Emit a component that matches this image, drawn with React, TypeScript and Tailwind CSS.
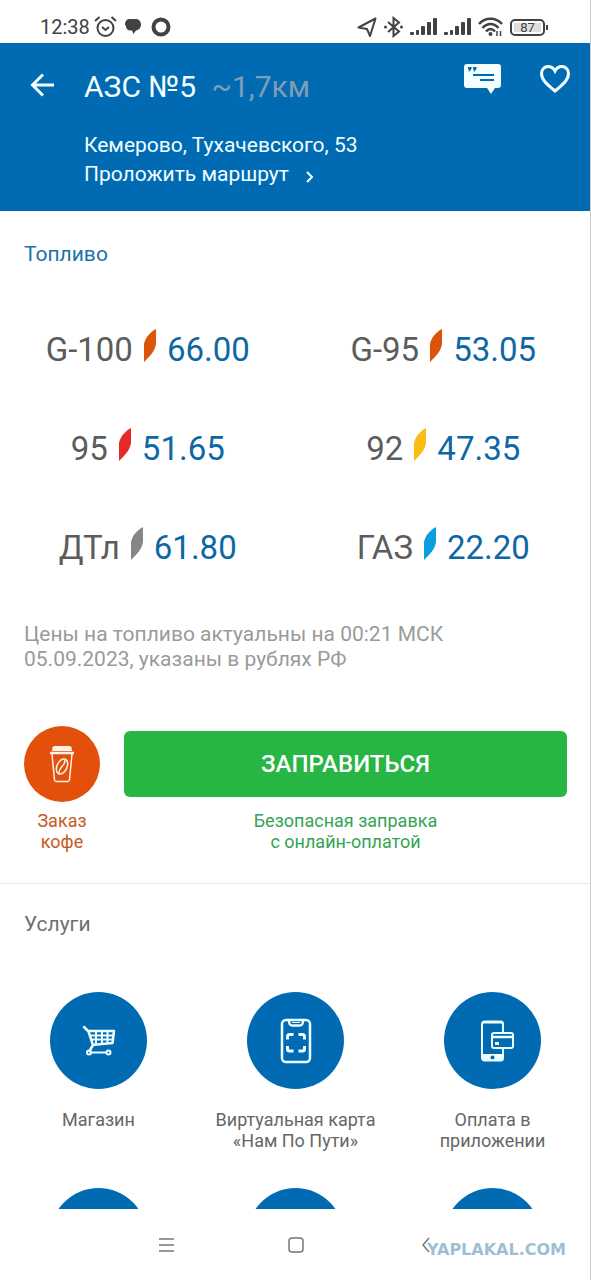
import { ReactNode } from "react";

type Fuel = {
  name: string;
  price: string;
  leaf: string;
};

type Service = {
  label: string[];
  icon?: ReactNode;
};

const fuels: Fuel[] = [
  { name: "G-100", price: "66.00", leaf: "text-[#d9560b]" },
  { name: "G-95", price: "53.05", leaf: "text-[#dd5209]" },
  { name: "95", price: "51.65", leaf: "text-[#e62a28]" },
  { name: "92", price: "47.35", leaf: "text-[#fbbc14]" },
  { name: "ДТл", price: "61.80", leaf: "text-[#868686]" },
  { name: "ГАЗ", price: "22.20", leaf: "text-[#0a9de0]" },
];

const services: Service[] = [
  { label: ["Магазин"], icon: <CartIcon /> },
  { label: ["Виртуальная карта", "«Нам По Пути»"], icon: <CardScanIcon /> },
  { label: ["Оплата в", "приложении"], icon: <PhonePayIcon /> },
  { label: [] },
  { label: [] },
  { label: [] },
];

function CartIcon() {
  return (
    <svg width="34" height="32" viewBox="0 0 34 32" fill="none" stroke="currentColor">
      <path d="M2 2l4.500 4.500L11 20l-3.500 6" strokeWidth="2.500" strokeLinecap="round" />
      <path d="M6 6h26l-1.500 12L10 20" strokeWidth="2.500" strokeLinejoin="round" />
      <path d="M7.500 10.500h24M9 14.500h21.500M14 6v13M20 6v12.500M25.500 6v12" strokeWidth="2" />
      <path d="M9 27.500h16" strokeWidth="2" />
      <circle cx="7" cy="27.500" r="2" strokeWidth="2" />
      <circle cx="26.500" cy="27.500" r="2" strokeWidth="2" />
    </svg>
  );
}

function CardScanIcon() {
  return (
    <svg width="32" height="46" viewBox="0 0 32 46" fill="none" stroke="currentColor" strokeWidth="2.500">
      <rect x="2" y="2" width="28" height="42" rx="4" />
      <path d="M9 2.500c0 4 1 5 3.500 5h7c2.500 0 3.500-1 3.500-5" />
      <path d="M12 4.500h8" strokeWidth="1" />
      <path
        d="M7.500 21.500v-3a2 2 0 0 1 2-2h4M18.500 16.500h4a2 2 0 0 1 2 2v3M24.500 28v3a2 2 0 0 1-2 2h-4M13.500 33h-4a2 2 0 0 1-2-2v-3"
        strokeWidth="3"
      />
    </svg>
  );
}

function PhonePayIcon() {
  return (
    <svg className="ml-2" width="34" height="42" viewBox="0 0 34 42" fill="none" stroke="currentColor" strokeWidth="2">
      <path d="M23 12V4a2.500 2.500 0 0 0-2.500-2.500h-16A2.500 2.500 0 0 0 2 4v34a2.500 2.500 0 0 0 2.500 2.500h16A2.500 2.500 0 0 0 23 38V28" />
      <path
        fillRule="evenodd"
        fill="currentColor"
        stroke="none"
        d="M2 34h21v5l-2 2H4l-2-2zM12.500 35.500a2 2 0 1 0 0 4 2 2 0 0 0 0-4z"
      />
      <path d="M3 2.500h19" />
      <rect x="12" y="13" width="21" height="15" rx="2" />
      <path d="M12 17h21" strokeWidth="2.500" />
      <rect x="15" y="22" width="4" height="3" fill="currentColor" stroke="none" />
    </svg>
  );
}

function CoffeeIcon() {
  return (
    <svg width="26" height="38" viewBox="0 0 26 38" fill="none" stroke="currentColor" strokeWidth="1.500">
      <path d="M3.500 2.500Q4 1 5.500 1h15q1.500 0 2 1.500L23 6H3z" fill="currentColor" stroke="none" />
      <path d="M1 8h24" strokeWidth="2.500" />
      <path d="M3 9l2.500 26q.2 1.500 2 1.500h11q1.800 0 2-1.500L23 9" />
      <ellipse cx="13" cy="21.500" rx="5" ry="8" transform="rotate(25 13 21.500)" />
      <path d="M16 15c0 4-1.500 5-3 6.500s-3 3-3 6.500" />
    </svg>
  );
}

function Leaf() {
  return (
    <svg width="12" height="33" viewBox="0 0 12 33" fill="currentColor">
      <path d="M12 0v15C11 22 6 27 0 33V15C1.500 8 6 3.500 12 0z" />
    </svg>
  );
}

function Signal() {
  return (
    <svg width="27" height="18" viewBox="0 0 27 18" fill="currentColor">
      <rect x="0" y="14" width="4" height="3" rx="1" />
      <rect x="6" y="12" width="3" height="5" rx="1" />
      <rect x="11" y="8" width="4" height="9" rx="1" />
      <rect x="17" y="4" width="4" height="13" rx="1" />
      <rect x="23" y="0" width="4" height="17" rx="1" />
    </svg>
  );
}

function StatusBar() {
  return (
    <div className="flex h-[43px] shrink-0 items-end justify-between pr-[43px] pb-1 pl-10 text-[#424242]">
      <div className="flex h-6 items-center">
        <span className="text-[20px] leading-6">12:38</span>
        <svg className="ml-1" width="23" height="22" viewBox="0 0 23 22" fill="none" stroke="currentColor" strokeWidth="2">
          <circle cx="11.500" cy="12" r="8" />
          <path d="M1 5l4.500-4M22 5l-4.500-4" />
          <path d="M8 11l3.500 3 3.500-3" />
        </svg>
        <svg className="ml-2" width="16" height="18" viewBox="0 0 16 18" fill="currentColor">
          <path d="M5 1h6c3 0 5 2.500 5 5.500S14 12 11 12.500L8.500 16 7 12.500H5.500C2.500 12.500 1 10.500 1 8.500L0 6.500C0 3 2 1 5 1z" />
        </svg>
        <svg className="ml-2.5" width="20" height="20" viewBox="0 0 20 20" fill="none" stroke="currentColor" strokeWidth="4">
          <circle cx="10" cy="10" r="7.500" />
        </svg>
      </div>
      <div className="flex h-6 items-center gap-[7px]">
        <svg width="20" height="20" viewBox="0 0 20 20" fill="none" stroke="currentColor" strokeWidth="2" strokeLinejoin="round">
          <path d="M18.500 1.500L1.500 10.500l8.500 1.500 3 7z" />
        </svg>
        <svg width="19" height="22" viewBox="0 0 19 22" fill="none" stroke="currentColor" strokeWidth="2">
          <path d="M4 6l11 9.500-5.500 4.500V2l5.500 4.500L4 16" />
          <circle cx="1.500" cy="11" r="1.500" fill="currentColor" stroke="none" />
          <circle cx="17.500" cy="11" r="1.500" fill="currentColor" stroke="none" />
        </svg>
        <Signal />
        <Signal />
        <svg width="25" height="20" viewBox="0 0 25 20" fill="none" stroke="currentColor" strokeWidth="2.500">
          <path d="M1 7c6-7 17-7 23 0M4.500 11c4.500-5.500 11.500-5.500 16 0M8 14.500c3-3.500 6-3.500 9 0" />
          <circle cx="12.500" cy="17" r="2" fill="currentColor" stroke="none" />
          <path d="M19 14v5M22.500 14v5" strokeWidth="1.500" />
        </svg>
        <div className="flex items-center gap-px">
          <div className="flex h-[17px] w-[35px] rounded-[5px] border-2 border-current p-[2px]">
            <span className="flex-1 bg-[#dedede] text-center text-[13px] leading-[10px]">87</span>
          </div>
          <div className="h-[5px] w-[2px] bg-current" />
        </div>
      </div>
    </div>
  );
}

function Header() {
  return (
    <header className="flex h-[168px] shrink-0 items-start bg-[#006bb3] pr-5 pl-[30px] text-[#f2feff]">
      <button type="button" aria-label="Назад" className="mt-[30px] w-[54px]">
        <svg width="24" height="24" viewBox="0 0 24 24" fill="none" stroke="currentColor" strokeWidth="3">
          <path d="M24 12H2.500M13 1.500L2.500 12 13 22.500" />
        </svg>
      </button>
      <div className="mt-6 flex-1">
        <h1 className="text-[30px] leading-10">
          АЗС №5 <span className="ml-2 text-[#7f9db5]">~1,7км</span>
        </h1>
        <p className="mt-6 text-[21px] leading-[29px]">Кемерово, Тухачевского, 53</p>
        <a href="#route" className="flex items-center gap-4 text-[21px] leading-[29px]">
          Проложить маршрут
          <svg className="mt-1" width="9" height="12" viewBox="0 0 9 12" fill="none" stroke="currentColor" strokeWidth="2">
            <path d="M2 1l5 5-5 5" />
          </svg>
        </a>
      </div>
      <button type="button" aria-label="Отзывы" className="mt-5 mr-[38px]">
        <svg width="37" height="32" viewBox="0 0 37 32" fill="currentColor">
          <path d="M3 1h31q3 0 3 3v18q0 3-3 3h-3l-4 6-4-6H3q-3 0-3-3V4q0-3 3-3z" />
          <g fill="#006bb3">
            <path d="M4 4h3.500v2L5.500 8.500H4.500L5 6.500H4zM9 4h3.500v2L10.500 8.500H9.500L10 6.500H9z" />
            <rect x="9" y="11" width="21" height="2" />
            <rect x="16" y="16" width="14" height="2" />
          </g>
        </svg>
      </button>
      <button type="button" aria-label="В избранное" className="mt-[21px]">
        <svg width="32" height="29" viewBox="0 0 32 29" fill="none" stroke="currentColor" strokeWidth="3">
          <path d="M16 27C7 19.500 2.500 15.500 2.500 9.500c0-4 3-7 6.500-7 3 0 5.500 1.500 7 4.500 1.500-3 4-4.500 7-4.500 3.500 0 6.500 3 6.500 7 0 6-4.500 10-13.500 17.500z" />
        </svg>
      </button>
    </header>
  );
}

function FuelPrices() {
  return (
    <section className="px-6 pt-7">
      <h2 className="text-[21px] leading-[30px] text-[#1a72a8]">Топливо</h2>
      <ul className="-mx-6 mt-[31px] grid grid-cols-2">
        {fuels.map((fuel) => (
          <li key={fuel.name} className="flex h-[99px] items-center justify-center text-[33px] leading-10">
            <span className="text-[#5c5c5c]">{fuel.name}</span>
            <span className={"mx-[11px] mb-2 " + fuel.leaf}>
              <Leaf />
            </span>
            <span className="text-[#0e67a5]">{fuel.price}</span>
          </li>
        ))}
      </ul>
      <p className="mt-[25px] text-[21px] leading-[25px] text-[#9a9a9a]">
        Цены на топливо актуальны на 00:21 МСК
        <br />
        05.09.2023, указаны в рублях РФ
      </p>
    </section>
  );
}

function Actions() {
  return (
    <section className="mt-[54px] flex gap-6 border-b border-[#e9e9e9] px-6 pb-[31px] text-center text-[18px] leading-[21px]">
      <button type="button" className="w-[76px] text-[#c75a22]">
        <span className="mb-2 flex size-[76px] items-center justify-center rounded-full bg-[#e2500c] text-[#fff3e8]">
          <CoffeeIcon />
        </span>
        Заказ
        <br />
        кофе
      </button>
      <div className="flex-1 pt-[5px] text-[#34a354]">
        <button
          type="button"
          className="mb-[13px] h-[66px] w-full rounded-md bg-[#27b543] text-[24px] font-medium text-white"
        >
          ЗАПРАВИТЬСЯ
        </button>
        <p>
          Безопасная заправка
          <br />
          с онлайн-оплатой
        </p>
      </div>
    </section>
  );
}

function Services() {
  return (
    <section className="pt-[25px]">
      <h2 className="px-6 text-[21px] leading-[30px] text-[#6f6f6f]">Услуги</h2>
      <ul className="mt-[53px] grid auto-rows-[196px] grid-cols-3">
        {services.map((service, i) => (
          <li key={i} className="flex flex-col items-center text-center text-[18px] leading-[21px] text-[#666666]">
            <span className="mb-5 flex size-[97px] shrink-0 items-center justify-center rounded-full bg-[#006bb3] text-[#ecfeff]">
              {service.icon}
            </span>
            {service.label.map((line) => (
              <span key={line}>{line}</span>
            ))}
          </li>
        ))}
      </ul>
    </section>
  );
}

function NavBar() {
  return (
    <nav className="relative grid h-[71px] shrink-0 grid-cols-[1fr_130px_130px_130px_1fr] items-center text-[#777777]">
      <button type="button" aria-label="Недавние" className="col-start-2 flex justify-center">
        <svg width="16" height="16" viewBox="0 0 16 16" stroke="currentColor" strokeWidth="1.500">
          <path d="M1 2h15M1 8h15M1 14h15" />
        </svg>
      </button>
      <button type="button" aria-label="Домой" className="flex justify-center">
        <svg width="16" height="16" viewBox="0 0 16 16" fill="none" stroke="currentColor" strokeWidth="1.500">
          <rect x="1" y="1" width="14" height="14" rx="3" />
        </svg>
      </button>
      <button type="button" aria-label="Назад" className="flex justify-center">
        <svg width="8" height="16" viewBox="0 0 8 16" fill="none" stroke="currentColor" strokeWidth="1.500">
          <path d="M7 1L1 8l6 7" />
        </svg>
      </button>
      <span className="absolute right-[25px] bottom-5 font-['DejaVu_Sans',sans-serif] text-[16px] leading-5 font-bold text-[#9dbfd5]">
        YAPLAKAL.COM
      </span>
    </nav>
  );
}

export default function App() {
  return (
    <div className="relative flex h-screen flex-col bg-white font-[Roboto,sans-serif] after:absolute after:inset-y-0 after:right-0 after:w-px after:bg-[#cccccc]">
      <StatusBar />
      <Header />
      <main className="min-h-0 flex-1 overflow-y-auto [scrollbar-width:none]">
        <FuelPrices />
        <Actions />
        <Services />
      </main>
      <NavBar />
    </div>
  );
}
